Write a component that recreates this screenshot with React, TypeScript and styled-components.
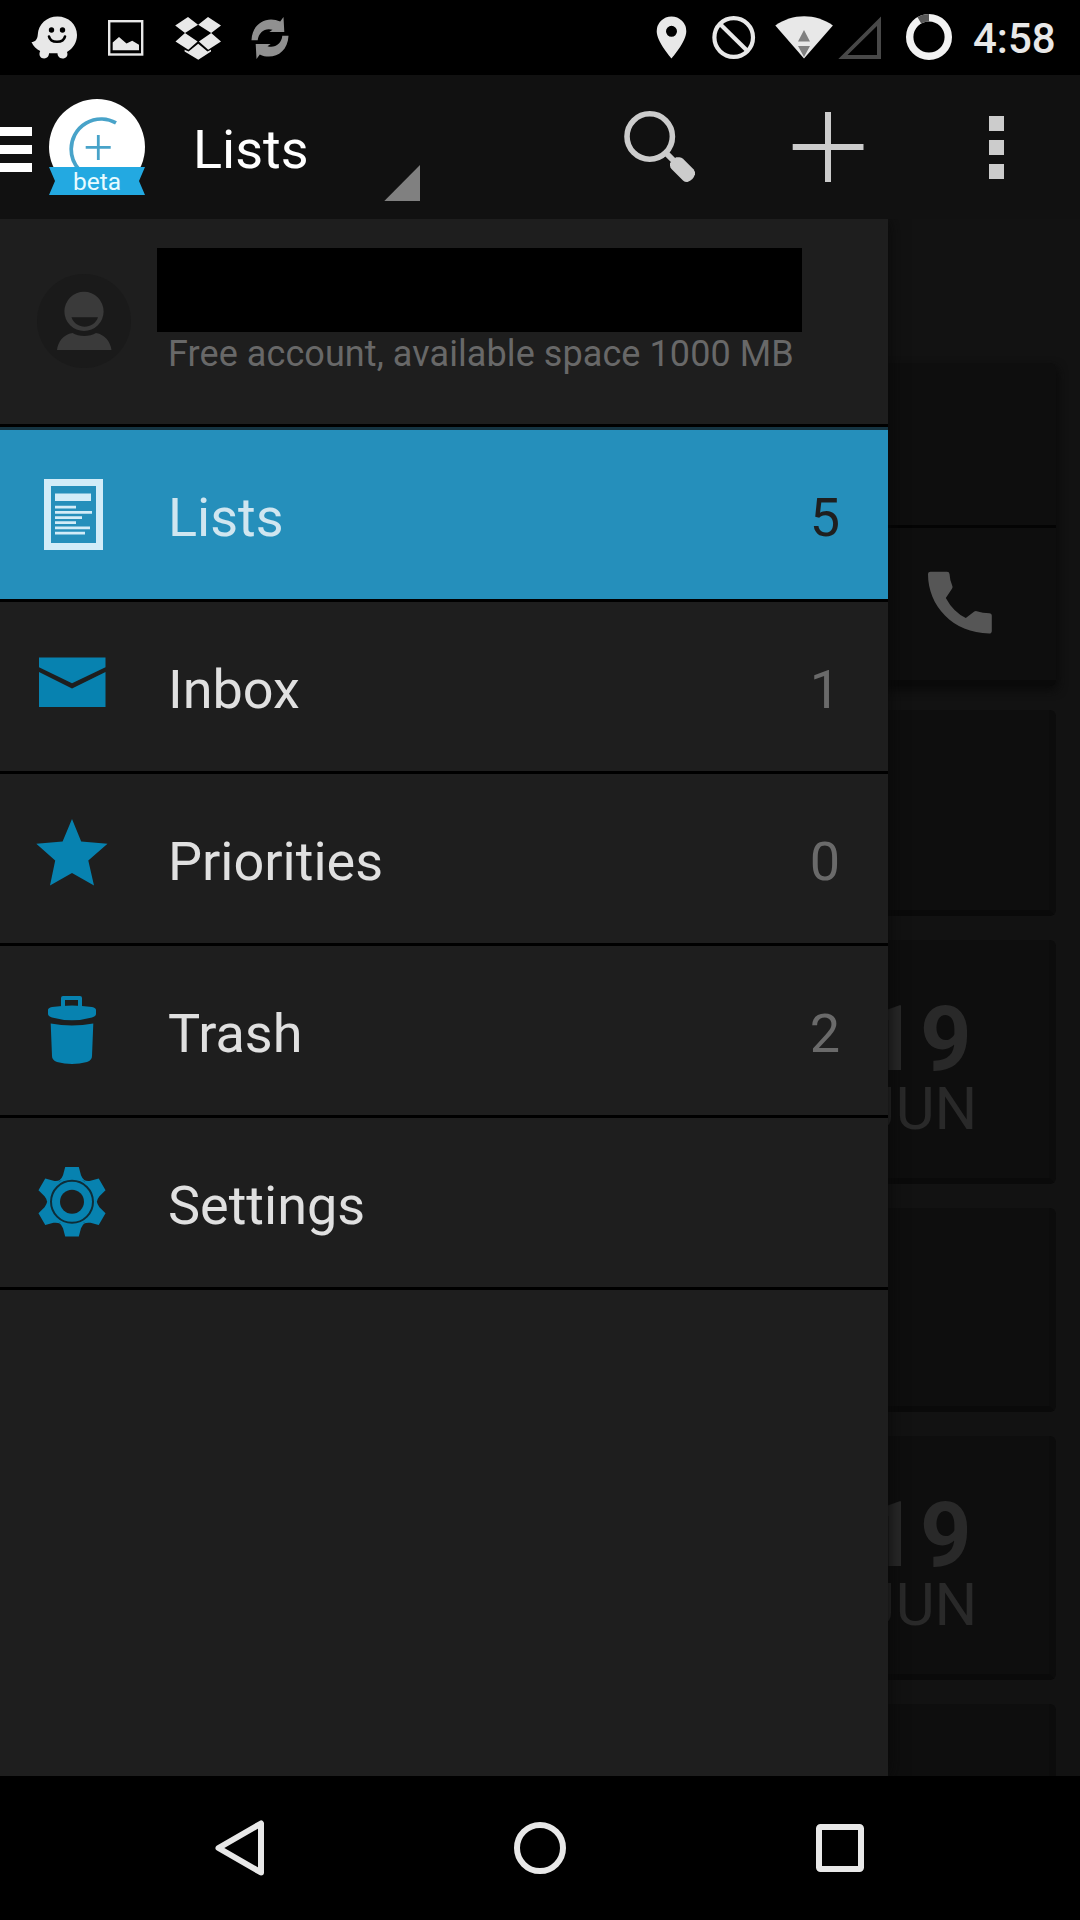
import React from "react";
import styled, { createGlobalStyle } from "styled-components";

const Global = createGlobalStyle`
  * { box-sizing: border-box; }
  body { margin: 0; background: #000; font-family: Roboto, "Liberation Sans", sans-serif; }
  svg { display: block; flex: none; }
`;

const Screen = styled.div`
  display: flex;
  flex-direction: column;
  width: 1080px;
  height: 1920px;
  overflow: hidden;
  background: #000;
`;

const StatusBar = styled.header`
  display: flex;
  justify-content: space-between;
  height: 75px;
  padding: 0 24px 0 18px;
`;

const IconGroup = styled.div`
  display: flex;
  align-items: center;
`;

const Clock = styled.time`
  width: 83px;
  padding-top: 3px;
  font-size: 42px;
  font-weight: 500;
  line-height: 50px;
  color: #e8e8e8;
  white-space: nowrap;
`;

const AppBar = styled.nav`
  display: flex;
  height: 144px;
  background: #111;
`;

const Spinner = styled.div`
  display: flex;
  align-items: center;
  width: 227px;
  margin-left: 48px;
`;

const Title = styled.h1`
  flex: 1;
  margin: 0;
  padding-top: 5px;
  font-size: 54px;
  font-weight: 400;
  line-height: 64px;
  color: #fff;
`;

const Actions = styled.div`
  display: flex;
  margin-left: auto;
`;

const Body = styled.main`
  position: relative;
  height: 1557px;
  overflow: hidden;
  background: #121212;
`;

const CardList = styled.div`
  display: flex;
  flex-direction: column;
  gap: 24px;
  padding: 144px 24px 0;
`;

const Card = styled.section<{ $h: number }>`
  flex: none;
  display: flex;
  flex-direction: column;
  align-items: flex-end;
  height: ${(p) => p.$h}px;
  padding-right: 74px;
  border-radius: 6px;
  border-right: 7px solid #0c0c0c;
  border-bottom: 6px solid #0a0a0a;
  background: #0e0e0e;
`;

const CallCard = styled(Card)`
  padding-right: 0;
  border-right: 0;
  box-shadow: 2px 4px 10px #0a0a0a;
`;

const CallHead = styled.div`
  width: 100%;
  height: 165px;
  border-bottom: 3px solid #040404;
`;

const CallAction = styled.div`
  display: flex;
  flex: 1;
  align-items: center;
  justify-content: center;
  width: 192px;
  padding-bottom: 3px;
`;

const DateBlock = styled.div`
  display: flex;
  flex-direction: column;
  align-items: center;
  width: 110px;
  margin-top: 57px;
  color: #292929;
`;

const Day = styled.span`
  font-size: 90px;
  font-weight: 700;
  line-height: 86px;
  letter-spacing: 2.5px;
`;

const Month = styled.span`
  font-size: 60px;
  line-height: 52px;
`;

const Drawer = styled.aside`
  position: absolute;
  inset: 0 auto 0 0;
  width: 888px;
  background: #1e1e1e;
  box-shadow: 0 0 16px #080808;
`;

const Account = styled.div`
  display: flex;
  height: 208px;
  border-bottom: 3px solid #000;
`;

const AccountText = styled.div`
  display: flex;
  flex-direction: column;
  margin-left: 21px;
  padding-top: 29px;
`;

const Redacted = styled.div`
  width: 645px;
  height: 84px;
  background: #000;
`;

const Quota = styled.p`
  margin: 1px 0 0 11px;
  font-size: 36px;
  line-height: 42px;
  letter-spacing: 0.08px;
  color: #686868;
  white-space: nowrap;
`;

const Menu = styled.div`
  display: flex;
  flex-direction: column;
  border-top: 3px solid #143442;
`;

const Row = styled.div<{ $active?: boolean }>`
  display: flex;
  align-items: center;
  height: 172px;
  padding: 0 48px 1px 0;
  border-bottom: 3px solid #000;
  background: ${(p) => (p.$active ? "#258fbb" : "#1e1e1e")};
`;

const IconCell = styled.div`
  display: flex;
  justify-content: center;
  width: 144px;
  margin-right: 24px;
`;

const Label = styled.span<{ $active?: boolean }>`
  flex: 1;
  padding-top: 7px;
  font-size: 54px;
  line-height: 64px;
  color: ${(p) => (p.$active ? "#d0e6f0" : "#e0e0e0")};
`;

const Count = styled.span<{ $active?: boolean }>`
  padding-top: 7px;
  font-size: 54px;
  line-height: 64px;
  color: ${(p) => (p.$active ? "#1f1f1f" : "#6a6a6a")};
`;

const NavBar = styled.footer`
  display: flex;
  align-items: center;
  justify-content: space-between;
  height: 144px;
  padding: 0 168px;
`;

type GlyphProps = { box: [number, number, number, number]; children: React.ReactNode };

const Glyph = ({ box, children }: GlyphProps) => (
  <svg width={box[2]} height={box[3]} viewBox={box.join(" ")}>{children}</svg>
);

const light = "#e8e8e8";
const blue = "#0782b0";

const WazeIcon = () => (
  <Glyph box={[18, 0, 72, 75]}>
    <path fill={light} d="M31.500 42c3.500 0 6-2.500 6.300-7.500C38.300 24 47 16.500 57.500 16.500 68.500 16.500 77 24.500 77 35c0 7.500-4 13.500-10 17 1.500 4-1 6.500-4.500 6.500-3.300 0-5-2.500-5-5.200h-8.500c0 3-2 5.200-4.800 5.200-3.700 0-6-3.200-4-7.500-3.500-1.800-7-4.500-8.700-9z" />
    <circle cx="51.500" cy="30" r="2.700" fill="#000" />
    <circle cx="62.500" cy="30" r="2.700" fill="#000" />
    <path d="M49 36.500c1.500 7 14.500 7 16 0" fill="none" stroke="#000" strokeWidth="2.600" strokeLinecap="round" />
  </Glyph>
);

const PictureIcon = () => (
  <Glyph box={[90, 0, 72, 75]}>
    <rect x="109.200" y="21.200" width="33" height="33.300" fill="none" stroke={light} strokeWidth="2.400" />
    <path fill={light} d="M112.700 50.300V42.500l6.300-5.500 7.500 6.600 5.700-2.800 6.800 4v5.500z" />
  </Glyph>
);

const DropboxIcon = () => (
  <Glyph box={[162, 0, 72, 75]}>
    <path fill={light} d="M188 17l10 7.700-13 8.300-9.800-7.500zM208 17l13 8.500-9.800 7.500-13-8.300zM185 33l12.600 8.600-9.300 8.200-12.800-8.300zM211.200 33l9.800 8.500-12.800 8.300-9.300-8.200zM198.200 43.700l9.300 7.800 3.500-1.800v1.800l-12.700 8.300-13.700-8.300v-1.800l4 1.800z" />
  </Glyph>
);

const syncArrow = "M251.500 40.300h6.200c.8-8 7.500-12.800 14.800-10.500l-3.200 2.300h15l-.8-15-3.300 4.500c-12-6-28 .5-28.700 18.700z";

const SyncIcon = () => (
  <Glyph box={[234, 0, 72, 75]}>
    <g fill="#909090">
      <path d={syncArrow} />
      <path transform="rotate(180 270 38)" d={syncArrow} />
    </g>
  </Glyph>
);

const SystemIcons = () => (
  <>
    <Glyph box={[640, 0, 62, 75]}>
      <path fill={light} fillRule="evenodd" d="M671.500 16.500a14.800 14.800 0 0 1 14.800 14.800c0 10.500-14.800 27.200-14.800 27.200s-14.800-16.700-14.800-27.200a14.800 14.800 0 0 1 14.800-14.800zm0 9.300a5.500 5.500 0 1 0 0 11 5.500 5.500 0 0 0 0-11z" />
    </Glyph>
    <Glyph box={[702, 0, 63, 75]}>
      <g fill="none" stroke={light} strokeWidth="4.200">
        <circle cx="733.700" cy="37.500" r="19.300" />
        <path d="M720 24l27.500 27" />
      </g>
    </Glyph>
    <Glyph box={[765, 0, 71, 75]}>
      <path fill={light} d="M775.300 25.600c17-12.400 40.600-12.400 57.600 0L804 58.500z" />
      <path fill="#808080" d="M804 30l6 11.500h-12zM798 46h12l-6 11z" />
    </Glyph>
    <Glyph box={[836, 0, 48, 75]}>
      <path fill="#484848" fillRule="evenodd" d="M838.300 59L881 16.500V59zM847.500 55H877V26z" />
    </Glyph>
    <Glyph box={[884, 0, 89, 75]}>
      <circle cx="929" cy="37" r="19.300" fill="none" stroke="#f2f2f2" strokeWidth="7.400" />
      <path d="M919.300 20.300a19.300 19.300 0 0 1 9.700-2.600" fill="none" stroke="#585858" strokeWidth="7.400" />
    </Glyph>
  </>
);

const Logo = () => (
  <Glyph box={[0, 75, 145, 144]}>
    <path fill="#fff" d="M0 127h32v9H0zM0 145h32v9H0zM0 163h32v9H0z" />
    <circle cx="97" cy="147" r="48" fill="#fff" />
    <path d="M116 122.900A30 30 0 0 0 71.200 149A30 30 0 0 0 79 169.400" fill="none" stroke="#48a3c9" strokeWidth="3.700" />
    <path d="M98.300 135v25M85.700 147.300h25" stroke="#48a3c9" strokeWidth="2.800" />
    <path fill="#111" d="M49 167h96v30H49z" />
    <path fill="#23a9e1" d="M49 167h96l-6 14 6 14H49l6-14z" />
    <text x="97" y="190" textAnchor="middle" fontFamily="Roboto, sans-serif" fontSize="24.500" fill="#e8fbff">beta</text>
  </Glyph>
);

const Triangle = () => (
  <Glyph box={[384, 75, 36, 144]}>
    <path fill="#808080" d="M384.300 201L420 165v36z" />
  </Glyph>
);

const SearchIcon = () => (
  <Glyph box={[576, 75, 168, 144]}>
    <circle cx="649.700" cy="136.500" r="22.700" fill="none" stroke="#ccc" strokeWidth="5.600" />
    <path d="M665.500 152.500l8 8" stroke="#ccc" strokeWidth="6" />
    <path fill="#ccc" d="M676 157.300h3.500q2 0 3.500 1.500l10.500 10.500q2 2.500 1.500 5-1.800 6-7.500 7.700-2.500.3-4.500-1.500l-11.500-11.500q-1.500-1.500-1.500-3.500v-2.500z" />
  </Glyph>
);

const AddIcon = () => (
  <Glyph box={[744, 75, 168, 144]}>
    <path fill="#ccc" d="M825 112h6v32h32.500v6H831v32h-6v-32h-32.300v-6H825z" />
  </Glyph>
);

const OverflowIcon = () => (
  <Glyph box={[912, 75, 168, 144]}>
    <path fill="#ccc" d="M989 116h15v15h-15zM989 140h15v15h-15zM989 164h15v15h-15z" />
  </Glyph>
);

const Avatar = () => (
  <Glyph box={[0, 219, 136, 205]}>
    <circle cx="84" cy="321" r="47" fill="#1a1a1a" />
    <path fill="#3a3a3a" fillRule="evenodd" d="M84 291.800a19.600 19.600 0 1 1 0 39.200 19.600 19.600 0 0 1 0-39.200zM71.500 317.300c4 12.500 22.500 12.500 26.500 0z" />
    <path fill="#3a3a3a" d="M57 350c1-8 6-15.500 15.500-17 6 4 17.500 4 23.500 0 9 1.500 14.500 9 15.500 17z" />
  </Glyph>
);

const ListIcon = () => (
  <Glyph box={[36, 470, 72, 88]}>
    <g fill="#d2ecf8">
      <path fillRule="evenodd" d="M44 479h59v71H44zM51 486v57h45v-57z" />
      <path d="M55 493.500h36v7.500H55zM55 505.700h21v2.700H55zM55 511h37v2.700H55zM55 516.200h27v2.700H55zM55 521.300h21v2.700H55zM55 526.500h35v2.700H55zM55 531.700h30v2.700H55z" />
    </g>
  </Glyph>
);

const MailIcon = () => (
  <Glyph box={[36, 642, 72, 88]}>
    <path fill={blue} d="M39 657.500h66.500v9.800L72 683.300 39 667.300zM39 672l33 16.500 33.500-16.500v35H39z" />
  </Glyph>
);

const StarIcon = () => (
  <Glyph box={[36, 814, 72, 88]}>
    <path fill={blue} d="M72 819l9.200 22.500 26.300 2.300-19.200 16.700 5.700 25-22-12.500-22 12.500 5.200-25-18.900-16.700 26.300-2.300z" />
  </Glyph>
);

const TrashIcon = () => (
  <Glyph box={[36, 986, 72, 88]}>
    <path fill={blue} fillRule="evenodd" d="M61 1008.500V998q0-2 2-2h17q2 0 2 2v10.500zM65 1000v6h13v-6z" />
    <path fill={blue} d="M48 1010q0-2 4-3 20-3 40 0 4 1 4 3v4q0 2-4 3.500-20 5.500-40 0-4-1.500-4-3.500zM50.700 1023.500q21.300 4 42.600 0L92 1056q0 4-5 6-15 4-30 0-5-2-5-6z" />
  </Glyph>
);

const GearIcon = () => (
  <Glyph box={[36, 1158, 72, 88]}>
    <g transform="translate(72 1201.800)">
      {[0, 60, 120, 180, 240, 300].map((a) => (
        <path key={a} transform={`rotate(${a})`} fill={blue} d="M-6.800-34.800H6.800L9-26.500q1 3 4 5.500h-26q3-2.500 4-5.500z" />
      ))}
      <circle r="24" fill={blue} />
      <circle r="21" fill="none" stroke="#0e2d38" strokeWidth="2" />
      <circle r="12" fill="#1e1e1e" />
    </g>
  </Glyph>
);

const PhoneIcon = () => (
  <Glyph box={[920, 566, 80, 74]}>
    <path fill="#565656" d="M928 574q0-2.300 2.500-2.300H947q2.300 0 2.500 2.300.3 6.500 3 12.500.3 1.300-.7 2.500l-6 9q7.500 14 20 20l8.500-6.500q1.200-.8 2.500-.3 6 1.800 12.500 2 2.500 0 2.500 2.500v15q0 2.800-2.500 2.800C953 633 928 606 928 574z" />
  </Glyph>
);

const menu = [
  { label: "Lists", count: 5, Icon: ListIcon, active: true },
  { label: "Inbox", count: 1, Icon: MailIcon },
  { label: "Priorities", count: 0, Icon: StarIcon },
  { label: "Trash", count: 2, Icon: TrashIcon },
  { label: "Settings", Icon: GearIcon },
];

const DateCard = () => (
  <Card $h={244}>
    <DateBlock>
      <Day>19</Day>
      <Month>JUN</Month>
    </DateBlock>
  </Card>
);

export default function App() {
  return (
    <Screen>
      <Global />
      <StatusBar>
        <IconGroup>
          <WazeIcon />
          <PictureIcon />
          <DropboxIcon />
          <SyncIcon />
        </IconGroup>
        <IconGroup>
          <SystemIcons />
          <Clock>4:58</Clock>
        </IconGroup>
      </StatusBar>
      <AppBar>
        <Logo />
        <Spinner>
          <Title>Lists</Title>
          <Triangle />
        </Spinner>
        <Actions>
          <SearchIcon />
          <AddIcon />
          <OverflowIcon />
        </Actions>
      </AppBar>
      <Body>
        <CardList>
          <CallCard $h={323}>
            <CallHead />
            <CallAction>
              <PhoneIcon />
            </CallAction>
          </CallCard>
          <Card $h={206} />
          <DateCard />
          <Card $h={204} />
          <DateCard />
          <Card $h={204} />
        </CardList>
        <Drawer>
          <Account>
            <Avatar />
            <AccountText>
              <Redacted />
              <Quota>Free account, available space 1000 MB</Quota>
            </AccountText>
          </Account>
          <Menu>
            {menu.map(({ label, count, Icon, active }) => (
              <Row key={label} $active={active}>
                <IconCell>
                  <Icon />
                </IconCell>
                <Label $active={active}>{label}</Label>
                {count !== undefined && <Count $active={active}>{count}</Count>}
              </Row>
            ))}
          </Menu>
        </Drawer>
      </Body>
      <NavBar>
        <Glyph box={[168, 1800, 144, 96]}>
          <path d="M218.500 1848L261 1823.500v49z" fill="none" stroke={light} strokeWidth="6" strokeLinejoin="round" />
        </Glyph>
        <Glyph box={[468, 1800, 144, 96]}>
          <circle cx="540" cy="1848" r="23" fill="none" stroke={light} strokeWidth="6" />
        </Glyph>
        <Glyph box={[768, 1800, 144, 96]}>
          <rect x="819" y="1827" width="42" height="42" rx="1.500" fill="none" stroke={light} strokeWidth="6" />
        </Glyph>
      </NavBar>
    </Screen>
  );
}
